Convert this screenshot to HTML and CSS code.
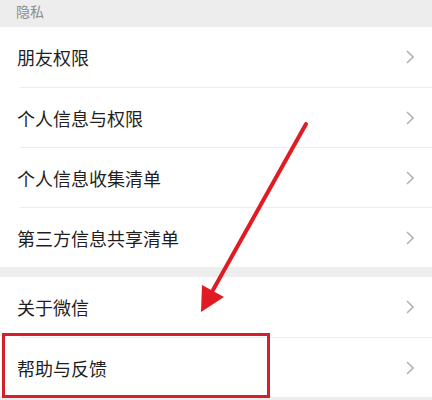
FILE: index.html
```html
<!DOCTYPE html>
<html lang="zh-CN">
<head>
    <meta charset="UTF-8">
    <meta name="viewport" content="width=device-width, initial-scale=1.0">
    <title>设置</title>
    <link rel="stylesheet" href="styles.css">
</head>
<body>
    <div class="page">
        <div class="section-title">隐私</div>

        <div class="group">
            <div class="cell">
                <span class="cell-label">朋友权限</span>
                <svg class="chevron" viewBox="0 0 8 14"><polyline points="1,1 7,7 1,13"/></svg>
            </div>
            <div class="cell">
                <span class="cell-label">个人信息与权限</span>
                <svg class="chevron" viewBox="0 0 8 14"><polyline points="1,1 7,7 1,13"/></svg>
            </div>
            <div class="cell">
                <span class="cell-label">个人信息收集清单</span>
                <svg class="chevron" viewBox="0 0 8 14"><polyline points="1,1 7,7 1,13"/></svg>
            </div>
            <div class="cell">
                <span class="cell-label">第三方信息共享清单</span>
                <svg class="chevron" viewBox="0 0 8 14"><polyline points="1,1 7,7 1,13"/></svg>
            </div>
        </div>

        <div class="spacer"></div>

        <div class="group">
            <div class="cell">
                <span class="cell-label">关于微信</span>
                <svg class="chevron" viewBox="0 0 8 14"><polyline points="1,1 7,7 1,13"/></svg>
            </div>
            <div class="cell">
                <span class="cell-label">帮助与反馈</span>
                <svg class="chevron" viewBox="0 0 8 14"><polyline points="1,1 7,7 1,13"/></svg>
            </div>
        </div>

        <!-- annotation drawn over the screenshot -->
        <svg class="annotation" viewBox="0 0 432 400">
            <line x1="306" y1="124" x2="213" y2="290" stroke="#e01b24" stroke-width="4" stroke-linecap="round"/>
            <polygon points="201,312 202,285 224,297" fill="#e01b24"/>
            <rect x="3.5" y="334.5" width="265" height="62" fill="none" stroke="#d3202b" stroke-width="3"/>
        </svg>
    </div>
</body>
</html>
```

FILE: styles.css
```css
body {
    margin: 0;
    font-family: "Noto Sans CJK SC", "Noto Sans", sans-serif;
    background-color: #ededed;
    color: #1f1f1f;
}
.page {
    position: relative;
    width: 432px;
    height: 400px;
    overflow: hidden;
}
.section-title {
    height: 27px;
    padding-left: 16px;
    font-size: 14px;
    line-height: 22px;
    color: #8c8c8c;
}
.group {
    background-color: #fff;
}
.cell {
    display: flex;
    align-items: center;
    justify-content: space-between;
    height: 60px;
    padding: 0 18px 0 17px;
    position: relative;
}
.cell + .cell {
    height: 59px;
    margin-top: 1px;
}
/* hairline divider, inset from the left edge */
.cell + .cell::before {
    content: "";
    position: absolute;
    left: 20px;
    right: 0;
    top: -1px;
    height: 1px;
    background-color: #ececec;
}
.cell-label {
    font-size: 18px;
    line-height: 1;
}
.chevron {
    width: 8px;
    height: 14px;
    fill: none;
    stroke: #b4b4b4;
    stroke-width: 1.6;
}
.spacer {
    height: 10px;
}
.annotation {
    position: absolute;
    left: 0;
    top: 0;
    width: 432px;
    height: 400px;
}
```
